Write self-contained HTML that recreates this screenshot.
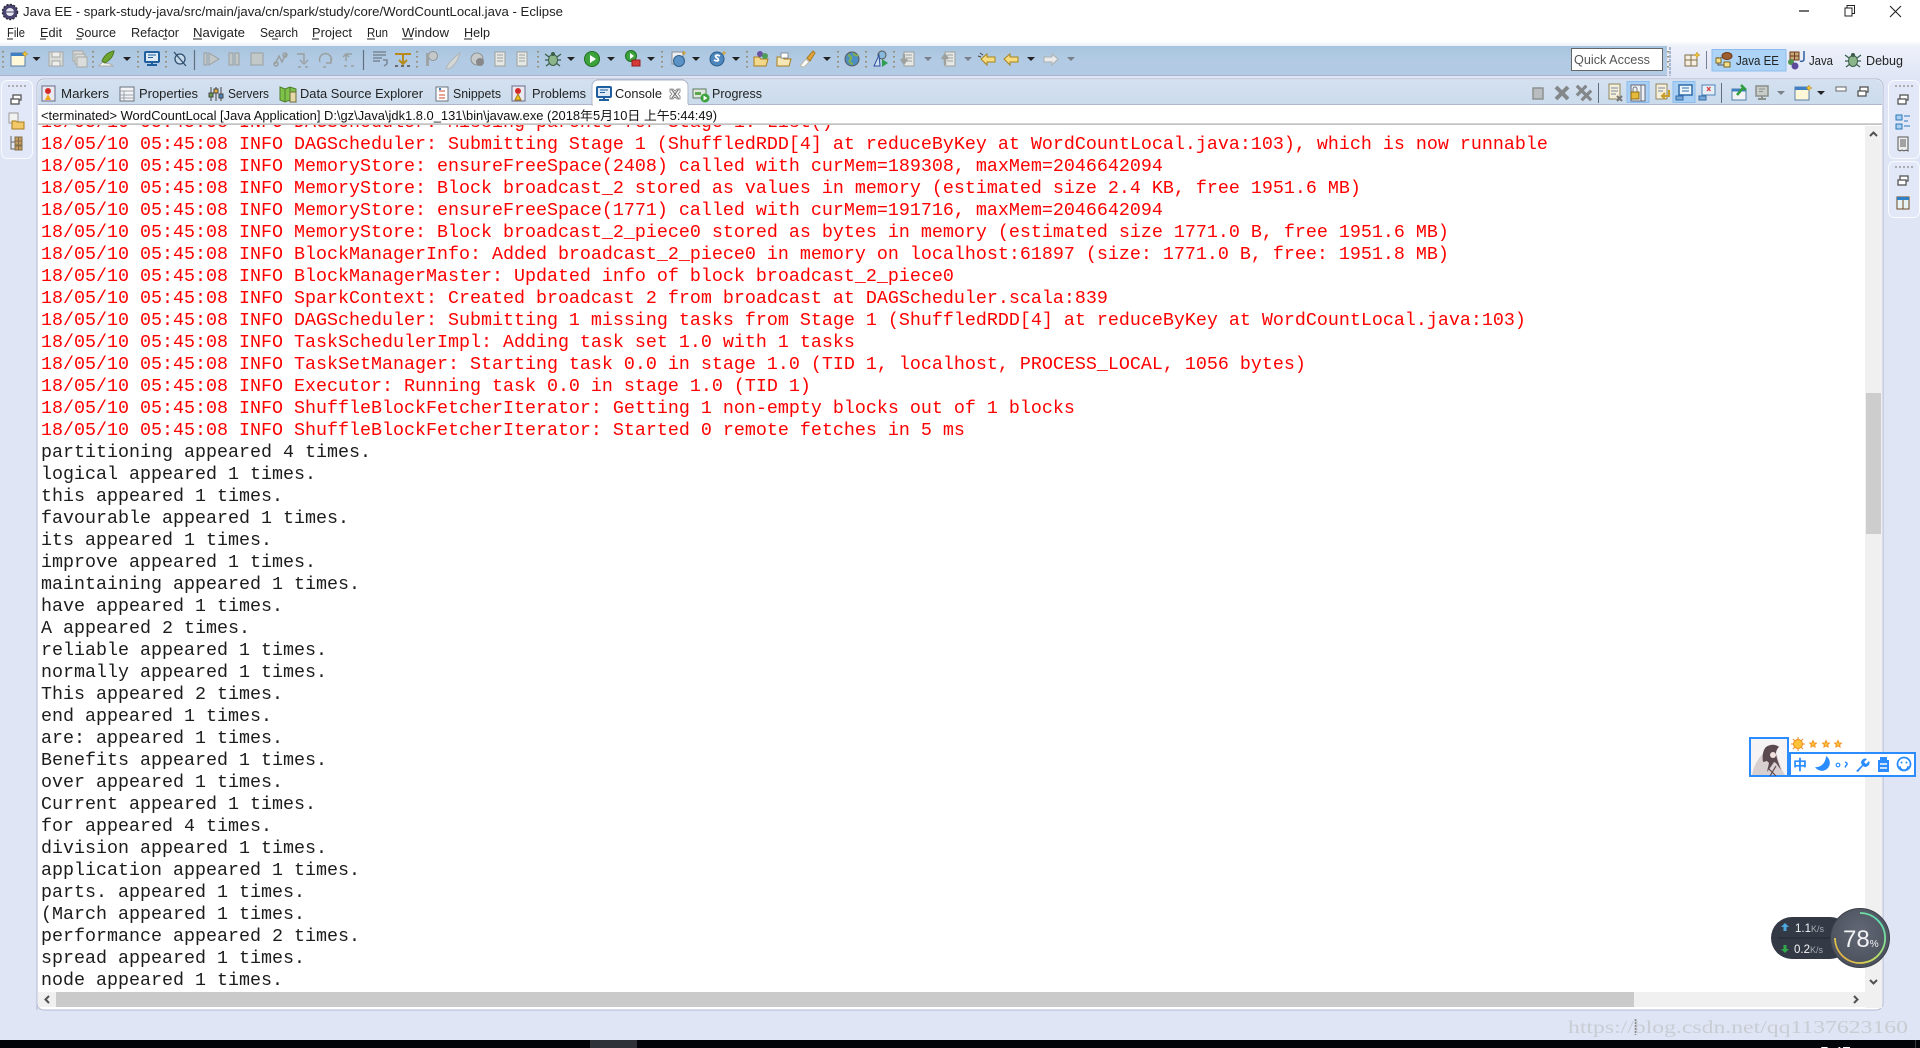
<!DOCTYPE html>
<html><head><meta charset="utf-8"><title>Java EE - Eclipse</title>
<style>
html,body{margin:0;padding:0;background:#dfe5f5;overflow:hidden}
svg{display:block;position:absolute;left:0;top:0}
text{font-family:"Liberation Sans","Noto Sans CJK SC",sans-serif;font-size:13px;fill:#222}
.c text{font-family:"Liberation Mono",monospace;font-size:18.33px}
.r text{fill:#ff0000}
.b text{fill:#1c1c1c}
</style></head><body>
<svg width="1920" height="1048" viewBox="0 0 1920 1048" xmlns="http://www.w3.org/2000/svg">
<defs>
<linearGradient id="tb" x1="0" y1="0" x2="0" y2="1"><stop offset="0" stop-color="#a7c3de"/><stop offset=".4" stop-color="#b1cae3"/><stop offset="1" stop-color="#b3cbe4"/></linearGradient>
<linearGradient id="tb2" x1="0" y1="0" x2="0" y2="1"><stop offset="0" stop-color="#eef1fa"/><stop offset="1" stop-color="#dfe5f5"/></linearGradient>
<linearGradient id="fade" x1="0" y1="0" x2="0" y2="1"><stop offset="0" stop-color="#fff"/><stop offset="1" stop-color="#e8edf5"/></linearGradient>
<linearGradient id="tabs" x1="0" y1="0" x2="0" y2="1"><stop offset="0" stop-color="#d3e0f0"/><stop offset="1" stop-color="#ccdcec"/></linearGradient>
<radialGradient id="ball" cx=".5" cy=".4" r=".7"><stop offset="0" stop-color="#626875"/><stop offset="1" stop-color="#474c58"/></radialGradient>
<linearGradient id="ring" x1="1" y1="0" x2="0" y2="1"><stop offset="0" stop-color="#3fd8c8"/><stop offset=".6" stop-color="#c9e05a"/><stop offset="1" stop-color="#f09a3c"/></linearGradient>
<g id="drop"><path d="M-4-2H4L0 2Z" fill="#222"/></g>
<g id="dropg"><path d="M-4-2H4L0 2Z" fill="#7b8088"/></g>
<g id="grip"><path d="M0-9v2M0-4v2M0 1v2M0 6v2" stroke="#8f7f5e" stroke-width="1.6" stroke-dasharray="1.5 1"/></g>
<g id="newf"><rect x="-7" y="-6" width="14" height="13" fill="#fff8d8" stroke="#5a7fa8"/><rect x="-7" y="-6" width="14" height="3" fill="#3f7fc4"/><path d="M7-8l1 2 2 1-2 1-1 2-1-2-2-1 2-1Z" fill="#f3c33a" stroke="#b08a20" stroke-width=".5"/></g>
<g id="mon"><rect x="-7" y="-7" width="14" height="10" rx="1" fill="#dfeaf6" stroke="#1f5f9e" stroke-width="2"/><path d="M-4-4h8M-4-1.500h5" stroke="#1f5f9e"/><path d="M-5 6h10M0 3v3" stroke="#1f5f9e" stroke-width="2"/></g>
<g id="gmon"><rect x="-6" y="-7" width="12" height="10" fill="#c8ccc8" stroke="#8a8f8a" stroke-width="1.500"/><path d="M-3-4h6M-3-1.500h4" stroke="#8a8f8a"/><path d="M-4 6h8M0 3v3" stroke="#8a8f8a" stroke-width="2"/></g>
<g id="gdoc"><rect x="-5" y="-7" width="10" height="14" fill="#e6e8e6" stroke="#9da19d"/><path d="M-3-4h6M-3-1h6M-3 2h6" stroke="#9da19d"/></g>
<g id="bug"><ellipse cx="0" cy="1" rx="4.500" ry="5.500" fill="#8db58a" stroke="#3a5e4a"/><path d="M-8-5l4 3M8-5l-4 3M-8 1h4M8 1h-4M-7 7l4-3M7 7l-4-3" stroke="#3a5e4a" stroke-width="1.300"/><circle cx="0" cy="-5" r="2" fill="#3a5e4a"/></g>
<g id="xx"><path d="M-6-6L6 6M6-6L-6 6" stroke="#85888a" stroke-width="4"/></g>
<g id="restore"><rect x="-3" y="-5" width="8" height="5" fill="#fff" stroke="#555" stroke-width="1.300"/><rect x="-5" y="-1" width="8" height="5" fill="#fff" stroke="#555" stroke-width="1.300"/></g>
<g id="star"><path d="M0-3.600L1.100-1.100 3.500-.9 1.700.7 2.200 3.200 0 1.900-2.200 3.200-1.700.7-3.500-.9-1.100-1.100Z" fill="#fbc23a" stroke="#f08a1a" stroke-width=".8"/></g>
</defs>

<!-- base -->
<rect width="1920" height="1048" fill="#dfe5f5"/>
<rect width="1920" height="41" fill="#fff"/>
<rect y="41" width="1920" height="6" fill="url(#fade)"/>
<rect y="46" width="1667" height="29" fill="url(#tb)"/>
<rect y="75" width="1667" height="1" fill="#a6b4cc"/>
<rect x="1667" y="46" width="253" height="32" fill="url(#tb2)"/>
<path d="M1670 47v29" stroke="#a6b4cc" stroke-width="2" stroke-dasharray="3 1"/>

<!-- title bar -->
<g transform="translate(10,12)"><circle r="7.500" fill="#4a4470"/><circle r="7.500" fill="none" stroke="#2a2a3a" stroke-width="1.500" stroke-dasharray="2 1.500"/><circle r="4" fill="#e8e8ee"/><path d="M-4 0h8" stroke="#4a4470"/></g>
<text x="23" y="16" textLength="540" lengthAdjust="spacingAndGlyphs" style="font-size:13px">Java EE - spark-study-java/src/main/java/cn/spark/study/core/WordCountLocal.java - Eclipse</text>
<path d="M1799 11h10" stroke="#111" stroke-width="1.200"/>
<rect x="1845" y="8" width="7" height="8" fill="#fff" stroke="#222"/><path d="M1847 8v-2.500h7.500v8h-2.500" fill="none" stroke="#222"/>
<path d="M1890 6l11 11M1901 6l-11 11" stroke="#222" stroke-width="1.100"/>

<!-- menu -->
<g style="font-size:13px">
<text x="7" y="37" textLength="18" lengthAdjust="spacingAndGlyphs">File</text>
<text x="40" y="37" textLength="22" lengthAdjust="spacingAndGlyphs">Edit</text>
<text x="76" y="37" textLength="40" lengthAdjust="spacingAndGlyphs">Source</text>
<text x="131" y="37" textLength="48" lengthAdjust="spacingAndGlyphs">Refactor</text>
<text x="193" y="37" textLength="52" lengthAdjust="spacingAndGlyphs">Navigate</text>
<text x="260" y="37" textLength="38" lengthAdjust="spacingAndGlyphs">Search</text>
<text x="312" y="37" textLength="40" lengthAdjust="spacingAndGlyphs">Project</text>
<text x="367" y="37" textLength="21" lengthAdjust="spacingAndGlyphs">Run</text>
<text x="402" y="37" textLength="47" lengthAdjust="spacingAndGlyphs">Window</text>
<text x="464" y="37" textLength="26" lengthAdjust="spacingAndGlyphs">Help</text>
</g>
<path d="M7 39h6M40 39h6M76 39h6M163 39h4M193 39h9M272 39h6M312 39h7M367 39h8M402 39h11M464 39h8" stroke="#222"/>

<!-- main toolbar icons -->
<use href="#grip" x="3" y="60"/><use href="#newf" x="18" y="59"/><use href="#drop" x="36.500" y="59"/>
<g transform="translate(56,59)"><rect x="-7" y="-7" width="14" height="14" fill="#d9dcd9" stroke="#a6a9a6"/><rect x="-4" y="-7" width="8" height="5" fill="#eee" stroke="#a6a9a6"/><rect x="-4" y="2" width="8" height="5" fill="#eee" stroke="#a6a9a6"/></g>
<g transform="translate(80,59)" stroke="#a6a9a6" fill="#d9dcd9"><rect x="-7" y="-8" width="10" height="10"/><rect x="-5" y="-5" width="10" height="10"/><rect x="-3" y="-2" width="10" height="10"/></g>
<use href="#grip" x="93" y="60"/>
<g transform="translate(107,59)"><path d="M-8 7c2-4 5-4 7-3s4 0 7 3Z" fill="#f1f2ea" stroke="#aaa"/><path d="M-5 2C-3-3 1-7 7-8 6-2 3 1-2 4Z" fill="#6da52f" stroke="#4d7a1e"/></g>
<use href="#drop" x="127" y="59"/><use href="#grip" x="138" y="60"/>
<use href="#mon" x="152" y="59"/><use href="#grip" x="166" y="60"/>
<g transform="translate(180,59)"><circle r="5" fill="#c6d9ea" stroke="#2f4f6f" stroke-width="1.300"/><path d="M-6-7L6 7" stroke="#2f4f6f" stroke-width="1.300"/></g>
<path d="M194.500 50v20" stroke="#5f6f7f" stroke-width="1.200"/>
<g fill="#c2c7c7" stroke="#9aa0a0">
<path d="M204 53h3v12h-3ZM209 53l10 6-10 6Z"/>
<rect x="229" y="53" width="4" height="12"/><rect x="235" y="53" width="4" height="12"/>
<rect x="251" y="53" width="12" height="12"/>
</g>
<g fill="none" stroke="#9aa0a0" stroke-width="1.500">
<path d="M275 64l4-8 3 6 4-8"/><circle cx="276" cy="64" r="2"/><circle cx="285" cy="55" r="2"/>
<path d="M297 54h7v8M300 60l4 4 4-4M298 67h3M305 67h3"/>
<path d="M320 62a6 6 0 1 1 11 0M331 58v5h-5M323 67h3"/>
<path d="M344 66h3M351 66h3M352 54h-6v7M349 57l-3-3-3 3" />
</g>
<path d="M363.500 50v20" stroke="#5f6f7f" stroke-width="1.200"/>
<g transform="translate(380,59)" stroke="#7a8794" fill="none" stroke-width="1.500"><path d="M-7-7h13M-7-4h13M-7-1h9M-7 2h7M3 1h4v4M7 5l-3 2"/></g>
<g transform="translate(403,59)" stroke="#b78a1c" fill="none" stroke-width="2"><path d="M-8-5H8M0-5V4M-4 1l4 4 4-4"/><path d="M-8 7h3M-2 7h3M4 7h3" stroke="#6a6a6a"/></g>
<use href="#grip" x="417" y="60"/>
<g transform="translate(432,59)"><circle cx="1" cy="-3" r="4.500" fill="#c4c8c8" stroke="#8d9292"/><path d="M-6-6h3v13h-3Z" fill="#9ea3a3"/></g>
<path d="M446 68c2-4 7-10 14-15-2 7-6 13-11 16Z" fill="#d3d7d7" stroke="#b0b4b4"/>
<g transform="translate(477,59)"><circle r="6" fill="#c6caca" stroke="#8d9292"/><circle cx="3" cy="3" r="4" fill="#888"/></g>
<use href="#gdoc" x="500" y="59"/><use href="#gdoc" x="522" y="59"/>
<use href="#grip" x="538" y="60"/><use href="#bug" x="553" y="59"/><use href="#drop" x="571" y="59"/>
<g transform="translate(592,59)"><circle r="7.500" fill="#3ca23c" stroke="#1f6f1f"/><path d="M-2-4l6 4-6 4Z" fill="#fff"/></g><use href="#drop" x="611" y="59"/>
<g transform="translate(631,58)"><circle cy="-2" r="5.500" fill="#3ca23c" stroke="#1f6f1f"/><path d="M-1-5l4 3-4 3Z" fill="#fff"/><rect x="1" y="2" width="8" height="6" fill="#d83a3a" stroke="#8e1f1f"/></g><use href="#drop" x="651" y="59"/>
<use href="#grip" x="662" y="60"/>
<g transform="translate(678,59)"><rect x="-6" y="-7" width="11" height="12" fill="#eceef2" stroke="#8a9098"/><circle cx="1" cy="2" r="5.500" fill="#5b93c6" stroke="#2f5f8a"/><path d="M6-8v4M4-6h4" stroke="#d0a020"/></g><use href="#drop" x="696" y="59"/>
<g transform="translate(717,59)"><circle r="7" fill="#4d87bd" stroke="#2a5a8a"/><path d="M3-3c-4-2-6 0-3 2s1 4-3 2" stroke="#fff" stroke-width="1.800" fill="none"/><path d="M7-8v4M5-6h4" stroke="#d0a020"/></g><use href="#drop" x="736" y="59"/>
<use href="#grip" x="747" y="60"/>
<g transform="translate(761,59)"><path d="M-7-2h5l2 2H7L5 7H-7Z" fill="#f1d88a" stroke="#a87c1c"/><circle cx="-1" cy="-5" r="3" fill="#6b52a0"/><circle cx="4" cy="-3" r="3" fill="#4e9c5a"/></g>
<g transform="translate(784,59)"><path d="M-7-2h5l2 2H7L5 7H-7Z" fill="#f6e7b8" stroke="#a87c1c"/><rect x="-3" y="-6" width="7" height="5" fill="#fff" stroke="#8a8f98"/></g>
<g transform="translate(807,59)"><path d="M-7 7L-1 0 2 3-3 8Z" fill="#fff" stroke="#bba"/><path d="M0-1L6-8 8-6 3 2Z" fill="#e2a33c" stroke="#a87c1c"/></g><use href="#drop" x="827" y="59"/>
<use href="#grip" x="838" y="60"/>
<g transform="translate(852,59)"><circle r="7" fill="#4d8fc2" stroke="#5a5a5a"/><path d="M-4-4c3 1 4 3 2 5s2 4 3 4M2-6c-1 2 3 3 4 2" stroke="#7fb04a" stroke-width="2" fill="none"/></g>
<use href="#grip" x="866" y="60"/>
<g transform="translate(881,59)"><circle cx="1" cy="-4" r="4" fill="#88b8dc" stroke="#555"/><path d="M-7 7L-2-4-1 7Z" fill="#cfe0f0" stroke="#2f4f9f"/><path d="M1 0l6 4-6 4Z" fill="#2f9f4f"/></g>
<use href="#grip" x="894" y="60"/>
<g transform="translate(907,59)"><use href="#gdoc" x="2"/><path d="M-3-5V3M-6 0l3 4 3-4" stroke="#9da19d" stroke-width="2.500" fill="none"/></g><use href="#dropg" x="928" y="59"/>
<g transform="translate(948,59)"><use href="#gdoc" x="2"/><path d="M-3 6V-3M-6 0l3-4 3 4" stroke="#9da19d" stroke-width="2.500" fill="none"/></g><use href="#dropg" x="968" y="59"/>
<g fill="#f8dd80" stroke="#a8841c"><path d="M981 59l6-5v3h8v5h-8v3Z"/><path d="M1004 59l6-5v3h8v5h-8v3Z"/></g>
<path d="M980 53l3 2M978 56l3 1" stroke="#444"/><use href="#drop" x="1031" y="59"/>
<path d="M1058 59l-6-5v3h-8v5h8v3Z" fill="#eaeaea" stroke="#aab0b0"/><use href="#dropg" x="1071" y="59"/>

<!-- quick access + perspectives -->
<rect x="1571.500" y="48.500" width="91" height="22" fill="#fff" stroke="#666"/>
<text x="1574" y="64" textLength="76" lengthAdjust="spacingAndGlyphs" style="fill:#555">Quick Access</text>
<use href="#grip" x="1668" y="60"/>
<g transform="translate(1691,60)"><rect x="-6" y="-5" width="12" height="11" fill="#f4efe2" stroke="#7f6f4a"/><path d="M-6 0H6M0-5V6" stroke="#7f6f4a"/><path d="M6-8l1 2 2 1-2 1-1 2-1-2-2-1 2-1Z" fill="#f3c33a" stroke="#b08a20" stroke-width=".5"/></g>
<path d="M1706.500 51v18" stroke="#7a8090"/>
<rect x="1712" y="49.500" width="74" height="21.500" fill="#add4f6" stroke="#8dbdec"/>
<g transform="translate(1724,60)"><path d="M-6-3V5H1M-3-3V1" stroke="#555" fill="none"/><rect x="-8" y="-2" width="5" height="5" fill="#f6e18a" stroke="#7a6420"/><rect x="0" y="2" width="6" height="5" fill="#f6e18a" stroke="#7a6420"/><ellipse cx="3" cy="-4" rx="5" ry="3.500" fill="#9e5d2f" stroke="#6b3b1a"/></g>
<text x="1736" y="65" textLength="43" lengthAdjust="spacingAndGlyphs">Java EE</text>
<g transform="translate(1796,60)"><rect x="-6" y="-8" width="9" height="8" fill="#c8a97c" stroke="#6b3b1a"/><path d="M-1.500-8v8M-6-4h9" stroke="#6b3b1a"/><circle cx="-5" cy="2" r="3" fill="#4e8f4e"/><circle cx="-1" cy="6" r="3.500" fill="#5c4a9c"/><path d="M8-9v8c0 2-2 3-4 2" stroke="#2f5f9e" stroke-width="1.500" fill="none"/></g>
<text x="1809" y="65" textLength="24" lengthAdjust="spacingAndGlyphs">Java</text>
<use href="#bug" x="1853" y="60"/>
<text x="1866" y="65" textLength="37" lengthAdjust="spacingAndGlyphs">Debug</text>

<!-- left trim -->
<rect x="1.500" y="80.500" width="31" height="78" rx="6" fill="#e2e8f7" stroke="#fafbff"/>
<path d="M8 86h2M12 86h2M16 86h2M20 86h2M24 86h2" stroke="#999" stroke-width="1.500"/>
<use href="#restore" x="16" y="100"/>
<g transform="translate(16,121)"><rect x="-7" y="-8" width="9" height="10" fill="#f2f2f2" stroke="#9a9a9a"/><path d="M-4 0h4l1 1h7v7h-12Z" fill="#f2c869" stroke="#a87c1c"/></g>
<g transform="translate(16,143)"><path d="M-5-7V6H3M-5 -1H3" stroke="#666" fill="none"/><rect x="-1" y="-6" width="3.500" height="4" fill="#c79a5f" stroke="#7f6f4a"/><rect x="-1" y="-2" width="3.500" height="4" fill="#c79a5f" stroke="#7f6f4a"/><rect x="-1" y="3" width="3.500" height="4" fill="#c79a5f" stroke="#7f6f4a"/><rect x="2.500" y="-6" width="3.500" height="4" fill="#c79a5f" stroke="#7f6f4a"/><rect x="2.500" y="-2" width="3.500" height="4" fill="#c79a5f" stroke="#7f6f4a"/><rect x="2.500" y="3" width="3.500" height="4" fill="#c79a5f" stroke="#7f6f4a"/></g>

<!-- right trim -->
<rect x="1888.500" y="80.500" width="31" height="78" rx="6" fill="#e2e8f7" stroke="#fafbff"/>
<rect x="1888.500" y="161.500" width="31" height="56" rx="6" fill="#e2e8f7" stroke="#fafbff"/>
<path d="M1895 86h2M1899 86h2M1903 86h2M1907 86h2M1911 86h2M1895 167h2M1899 167h2M1903 167h2M1907 167h2M1911 167h2" stroke="#999" stroke-width="1.500"/>
<use href="#restore" x="1903" y="100"/><use href="#restore" x="1903" y="181"/>
<g transform="translate(1903,122)"><rect x="-7" y="-7" width="6" height="5" fill="#a9d0f0" stroke="#2a78b8"/><rect x="-7" y="2" width="6" height="5" fill="#a9d0f0" stroke="#2a78b8"/><path d="M1-6h6M1-1h4M1 4h6" stroke="#2a78b8"/></g>
<g transform="translate(1903,144)"><path d="M-5-7H5V7L3 6 1 7-1 6-3 7-5 6Z" fill="#eee" stroke="#555"/><path d="M-3-4h6M-3-2h6M-3 0h6M-3 2h6" stroke="#555"/></g>
<g transform="translate(1903,203)"><rect x="-6" y="-6" width="12" height="12" fill="#e8f4f4" stroke="#6b4a20"/><rect x="-6" y="-6" width="12" height="3" fill="#2f7fc4"/><path d="M0-3V6" stroke="#6b4a20"/></g>

<!-- console panel -->
<path d="M37 1010V86a7 7 0 0 1 7-7H1876a7 7 0 0 1 7 7V1003a7 7 0 0 1-7 7H44a7 7 0 0 1-7-7Z" fill="#fff" stroke="#b2b9d0"/>
<path d="M38 104V86a6 6 0 0 1 6-6H1876a6 6 0 0 1 6 6V104Z" fill="url(#tabs)"/>
<rect x="38" y="104" width="1844" height="1" fill="#aeb6cc"/>
<path d="M592 105V86a6 6 0 0 1 6-6H682a6 6 0 0 1 6 6V105Z" fill="#fff" stroke="#aeb6cc"/>
<rect x="593" y="104" width="95" height="2" fill="#fff"/>
<rect x="38" y="123.500" width="1844" height="1.200" fill="#a8a8a8"/>

<!-- tabs -->
<g style="font-size:13px">
<text x="61" y="98" textLength="48" lengthAdjust="spacingAndGlyphs">Markers</text>
<text x="139" y="98" textLength="59" lengthAdjust="spacingAndGlyphs">Properties</text>
<text x="228" y="98" textLength="41" lengthAdjust="spacingAndGlyphs">Servers</text>
<text x="300" y="98" textLength="123" lengthAdjust="spacingAndGlyphs">Data Source Explorer</text>
<text x="453" y="98" textLength="48" lengthAdjust="spacingAndGlyphs">Snippets</text>
<text x="532" y="98" textLength="54" lengthAdjust="spacingAndGlyphs">Problems</text>
<text x="615" y="98" textLength="47" lengthAdjust="spacingAndGlyphs">Console</text>
<text x="712" y="98" textLength="50" lengthAdjust="spacingAndGlyphs">Progress</text>
</g>
<g transform="translate(48,94)"><rect x="-6" y="-8" width="13" height="15" fill="#eaeaf0" stroke="#6a6a8a"/><circle cy="-3" r="3" fill="#d52a2a"/><path d="M-3 6l3-6 3 6Z" fill="#f2a51c"/></g>
<g transform="translate(127,94)"><rect x="-7" y="-7" width="14" height="14" fill="#f4f4f6" stroke="#6a7380"/><path d="M-7-3H7M-7 1H7M-7 4H7M-3-3V7" stroke="#9aa3b0"/></g>
<g transform="translate(216,94)" stroke="#444"><path d="M-5-7V7M0-7V7M5-7V7" fill="none"/><rect x="-7" y="-1" width="4" height="4" fill="#6ba04a"/><rect x="-2" y="-5" width="4" height="4" fill="#e2b13c"/><rect x="3" y="0" width="4" height="4" fill="#4f86c0"/></g>
<g transform="translate(288,94)"><path d="M-8-7l5 2 5-2 6 2V8L2 6-3 8-8 6Z" fill="#7fc24a" stroke="#4c7f2a"/><path d="M-3-5V8M2-7V6" stroke="#4c7f2a"/><rect x="2" y="-2" width="6" height="10" fill="#e6d9a8" stroke="#6b6b3a"/></g>
<g transform="translate(442,94)"><rect x="-6" y="-7" width="12" height="14" fill="#fff" stroke="#6a7380"/><path d="M-3-3h6M-3 1h6M-3 4h6" stroke="#d04a2a"/><path d="M-3-5h2" stroke="#3a7ac0" stroke-width="2"/></g>
<g transform="translate(518,94)"><rect x="-6" y="-8" width="13" height="15" fill="#eaeaf0" stroke="#6a6a8a"/><circle cy="-3" r="3" fill="#d52a2a"/><path d="M-3 6l3-6 3 6Z" fill="#f2c51c" stroke="#a87c1c"/></g>
<use href="#mon" x="604" y="94"/>
<g transform="translate(675,94)" fill="none" stroke="#777"><path d="M-3.500-4.500L3.500 4.500M3.500-4.500L-3.500 4.500" stroke-width="1.200"/><path d="M-5-5h3l2 2 2-2h3v3l-2 2 2 2v3h-3l-2-2-2 2h-3v-3l2-2-2-2Z" stroke-width=".8"/></g>
<g transform="translate(700,94)"><rect x="-7" y="-5" width="13" height="9" fill="#dfe5df" stroke="#5a7a5a"/><rect x="-5" y="-2" width="6" height="3" fill="#5aa84a"/><circle cx="5" cy="4" r="4.500" fill="#3ca23c"/><path d="M3.500 1.500l4 2.500-4 2.500Z" fill="#fff"/></g>

<!-- panel toolbar -->
<rect x="1627" y="81.500" width="22" height="21" fill="#a9d0f4" stroke="#8dbdec"/>
<rect x="1673" y="81.500" width="22" height="21" fill="#a9d0f4" stroke="#8dbdec"/>
<rect x="1533" y="88" width="10" height="11" fill="#b9bdbd" stroke="#8d9292" stroke-width="1.500"/>
<use href="#xx" x="1562" y="93"/>
<g transform="translate(1584,93) scale(.8)"><use href="#xx" x="-3" y="-3"/><use href="#xx" x="3" y="3"/></g>
<path d="M1598.500 83v20M1721.500 83v20" stroke="#5f6f7f"/>
<g transform="translate(1615,93)"><rect x="-6" y="-9" width="11" height="15" fill="#f5eed8" stroke="#8f8660"/><path d="M-4-5h7M-4-2h7M-4 1h5" stroke="#7a8aa0"/><path d="M2 3l5 5M7 3l-5 5" stroke="#777" stroke-width="2"/></g>
<g transform="translate(1638,93)"><rect x="-7" y="-8" width="14" height="16" fill="#eef2f6" stroke="#667"/><path d="M3-8V8" stroke="#667"/><rect x="-7" y="-1" width="8" height="7" fill="#e5b93a" stroke="#8a6a10"/><path d="M-5-1v-3a2 2 0 0 1 4 0v3" stroke="#777" fill="none"/></g>
<g transform="translate(1662,93)"><rect x="-6" y="-9" width="11" height="15" fill="#f5eed8" stroke="#8f8660"/><path d="M-4-5h7M-4-2h5" stroke="#7a8aa0"/><path d="M7-3V3H0M3 0L0 3l3 3" stroke="#c99d2a" stroke-width="2" fill="none"/></g>
<g transform="translate(1684,93)"><rect x="-5" y="-8" width="13" height="10" fill="#eef5fb" stroke="#2f6aa8" stroke-width="1.500"/><path d="M-2-5h7M-2-2h7" stroke="#2f6aa8"/><rect x="-8" y="3" width="7" height="4" fill="#7aa8d8" stroke="#2f6aa8"/></g>
<g transform="translate(1707,93)"><rect x="-5" y="-8" width="13" height="10" fill="#e6eef6" stroke="#4f82b8"/><path d="M0-6l3.500 4M3.500-6L0-2" stroke="#d84040" stroke-width="1.300"/><rect x="-8" y="3" width="7" height="4" fill="#7aa8d8" stroke="#2f6aa8"/></g>
<g transform="translate(1739,93)"><rect x="-7" y="-4" width="14" height="11" fill="#f4f4f6" stroke="#4f7fa8"/><rect x="-7" y="-4" width="14" height="2.500" fill="#3f7fc4"/><path d="M-2 2L4-5M2-8l5 5" stroke="#2f9f3f" stroke-width="2.500"/></g>
<use href="#gmon" x="1762" y="93"/><use href="#dropg" x="1781" y="93"/>
<use href="#newf" x="1802" y="93"/><use href="#drop" x="1821" y="93"/>
<rect x="1836" y="87" width="10" height="4" fill="#fff" stroke="#666"/>
<use href="#restore" x="1863" y="92"/>

<!-- breadcrumb -->
<text x="41" y="120" textLength="676" lengthAdjust="spacingAndGlyphs" style="font-size:12.500px;fill:#111">&lt;terminated&gt; WordCountLocal [Java Application] D:\gz\Java\jdk1.8.0_131\bin\javaw.exe (2018年5月10日 上午5:44:49)</text>

<!-- console -->
<clipPath id="cc"><rect x="38" y="125" width="1827" height="867"/></clipPath>
<g class="c" clip-path="url(#cc)">
<g class="r">
<text x="41" y="127">18/05/10 05:45:08 INFO DAGScheduler: Missing parents for Stage 1: List()</text>
<text x="41" y="149">18/05/10 05:45:08 INFO DAGScheduler: Submitting Stage 1 (ShuffledRDD[4] at reduceByKey at WordCountLocal.java:103), which is now runnable</text>
<text x="41" y="171">18/05/10 05:45:08 INFO MemoryStore: ensureFreeSpace(2408) called with curMem=189308, maxMem=2046642094</text>
<text x="41" y="193">18/05/10 05:45:08 INFO MemoryStore: Block broadcast_2 stored as values in memory (estimated size 2.4 KB, free 1951.6 MB)</text>
<text x="41" y="215">18/05/10 05:45:08 INFO MemoryStore: ensureFreeSpace(1771) called with curMem=191716, maxMem=2046642094</text>
<text x="41" y="237">18/05/10 05:45:08 INFO MemoryStore: Block broadcast_2_piece0 stored as bytes in memory (estimated size 1771.0 B, free 1951.6 MB)</text>
<text x="41" y="259">18/05/10 05:45:08 INFO BlockManagerInfo: Added broadcast_2_piece0 in memory on localhost:61897 (size: 1771.0 B, free: 1951.8 MB)</text>
<text x="41" y="281">18/05/10 05:45:08 INFO BlockManagerMaster: Updated info of block broadcast_2_piece0</text>
<text x="41" y="303">18/05/10 05:45:08 INFO SparkContext: Created broadcast 2 from broadcast at DAGScheduler.scala:839</text>
<text x="41" y="325">18/05/10 05:45:08 INFO DAGScheduler: Submitting 1 missing tasks from Stage 1 (ShuffledRDD[4] at reduceByKey at WordCountLocal.java:103)</text>
<text x="41" y="347">18/05/10 05:45:08 INFO TaskSchedulerImpl: Adding task set 1.0 with 1 tasks</text>
<text x="41" y="369">18/05/10 05:45:08 INFO TaskSetManager: Starting task 0.0 in stage 1.0 (TID 1, localhost, PROCESS_LOCAL, 1056 bytes)</text>
<text x="41" y="391">18/05/10 05:45:08 INFO Executor: Running task 0.0 in stage 1.0 (TID 1)</text>
<text x="41" y="413">18/05/10 05:45:08 INFO ShuffleBlockFetcherIterator: Getting 1 non-empty blocks out of 1 blocks</text>
<text x="41" y="435">18/05/10 05:45:08 INFO ShuffleBlockFetcherIterator: Started 0 remote fetches in 5 ms</text>
</g>
<g class="b">
<text x="41" y="457">partitioning appeared 4 times.</text>
<text x="41" y="479">logical appeared 1 times.</text>
<text x="41" y="501">this appeared 1 times.</text>
<text x="41" y="523">favourable appeared 1 times.</text>
<text x="41" y="545">its appeared 1 times.</text>
<text x="41" y="567">improve appeared 1 times.</text>
<text x="41" y="589">maintaining appeared 1 times.</text>
<text x="41" y="611">have appeared 1 times.</text>
<text x="41" y="633">A appeared 2 times.</text>
<text x="41" y="655">reliable appeared 1 times.</text>
<text x="41" y="677">normally appeared 1 times.</text>
<text x="41" y="699">This appeared 2 times.</text>
<text x="41" y="721">end appeared 1 times.</text>
<text x="41" y="743">are: appeared 1 times.</text>
<text x="41" y="765">Benefits appeared 1 times.</text>
<text x="41" y="787">over appeared 1 times.</text>
<text x="41" y="809">Current appeared 1 times.</text>
<text x="41" y="831">for appeared 4 times.</text>
<text x="41" y="853">division appeared 1 times.</text>
<text x="41" y="875">application appeared 1 times.</text>
<text x="41" y="897">parts. appeared 1 times.</text>
<text x="41" y="919">(March appeared 1 times.</text>
<text x="41" y="941">performance appeared 2 times.</text>
<text x="41" y="963">spread appeared 1 times.</text>
<text x="41" y="985">node appeared 1 times.</text>
</g>
</g>

<!-- scrollbars -->
<rect x="1865" y="126" width="17" height="882" fill="#f0f0f0"/>
<rect x="1866" y="393" width="15" height="141" fill="#cdcdcd"/>
<path d="M1870 136l3.500-3.500 3.500 3.500" fill="none" stroke="#505050" stroke-width="2"/>
<path d="M1870 980l3.500 3.500 3.500-3.500" fill="none" stroke="#505050" stroke-width="2"/>
<rect x="38" y="992" width="1827" height="15" fill="#f0f0f0"/>
<rect x="56" y="992" width="1578" height="15" fill="#cacaca"/>
<path d="M49 996l-3.500 3.500 3.500 3.500" fill="none" stroke="#505050" stroke-width="2"/>
<path d="M1854 996l3.500 3.500-3.500 3.500" fill="none" stroke="#505050" stroke-width="2"/>

<!-- IME widget -->
<rect x="1750" y="738" width="38" height="38" fill="#f6f3f4" stroke="#2a8cff" stroke-width="2"/>
<path d="M1752 775c2-10 6-17 12-22 4-3 10-2 13 2 2 7 4 14 8 20Z" fill="#d8cfd0"/>
<path d="M1763 762c-1-6 0-12 3-15 4-3 10-3 13 0-2 2-3 4-3 7 1 6 3 10 5 16l-5-7-2-1c-2 3-4 6-7 10l2-9-2-2Z" fill="#5b4950"/>
<circle cx="1773" cy="755" r="3" fill="#efe2de"/>
<path d="M1768 768l8 8M1776 766l-6 10" stroke="#5b4950" stroke-width="1.200"/>
<rect x="1790" y="753" width="125" height="23" fill="#fff" stroke="#2a8cff" stroke-width="2"/>
<text x="1793" y="770" style="font-size:14px;font-weight:bold;fill:#2a8cff;font-family:'Liberation Sans','Noto Sans CJK SC',sans-serif">中</text>
<path d="M1826 756a8 8 0 1 1-11 11c5 1 11-4 11-11Z" fill="#2a8cff"/>
<circle cx="1838" cy="765" r="1.800" fill="none" stroke="#2a8cff" stroke-width="1.200"/><path d="M1845 762.500a1.500 1.500 0 0 1 1 3l-1 2" stroke="#2a8cff" stroke-width="1.500" fill="none"/>
<path d="M1856 771l6-6a4 4 0 0 1 5-6l-3 3 2 2 3-3a4 4 0 0 1-6 5l-5 6Z" fill="#2a8cff"/>
<path d="M1878 760h11v12h-11ZM1880 757h7v3h-7Z" fill="#2a8cff"/><path d="M1880 764h7M1880 768h7" stroke="#fff" stroke-width="1.500"/>
<circle cx="1904" cy="764" r="6.500" fill="none" stroke="#2a8cff" stroke-width="1.800"/><circle cx="1901.500" cy="762.500" r="1" fill="#2a8cff"/><circle cx="1906.500" cy="762.500" r="1" fill="#2a8cff"/><path d="M1900 766a4 4 0 0 0 8 0" fill="none" stroke="#2a8cff" stroke-width="1.300"/>
<circle cx="1798" cy="744" r="4.500" fill="#fbc23a" stroke="#f08a1a"/><path d="M1798 737v2M1798 749v2M1791 744h2M1803 744h2M1793 739l1.500 1.500M1803 739l-1.500 1.500M1793 749l1.500-1.500M1803 749l-1.500-1.500" stroke="#f08a1a"/>
<use href="#star" x="1813" y="744"/><use href="#star" x="1826" y="744"/><use href="#star" x="1838" y="744"/>

<!-- net widget -->
<rect x="1771" y="917" width="80" height="42" rx="21" fill="#333945"/>
<path d="M1778 938h62" stroke="#262b33"/>
<path d="M1785 923l4 4h-2.500v4h-3v-4h-2.500Z" fill="#4ea8e0"/>
<path d="M1785 953l4-4h-2.500v-4h-3v4h-2.500Z" fill="#2fa84a"/>
<text x="1795" y="932" style="font-size:11.500px;fill:#f4f4f4">1.1<tspan style="font-size:9px;fill:#a8acb4">K/s</tspan></text>
<text x="1794" y="953" style="font-size:11.500px;fill:#f4f4f4">0.2<tspan style="font-size:9px;fill:#a8acb4">K/s</tspan></text>
<circle cx="1860" cy="938" r="29.500" fill="url(#ball)" stroke="#3a3f4a" stroke-width="1"/>
<path d="M1860 913a25 25 0 0 1 4 49.700A25 25 0 0 1 1835 938" fill="none" stroke="url(#ring)" stroke-width="1.800"/>
<text x="1843" y="947" style="font-size:24px;fill:#f2f2f4">78<tspan style="font-size:10px">%</tspan></text>

<!-- watermark -->
<text x="1568" y="1033" textLength="340" lengthAdjust="spacingAndGlyphs" style="font-family:'Liberation Serif',serif;font-size:18px;fill:#c9ccd3">https://blog.csdn.net/qq1137623160</text>
<path d="M1635.500 1019v16" stroke="#888" stroke-width="1.500" stroke-dasharray="2 1"/>

<!-- taskbar -->
<rect y="1040" width="1920" height="8" fill="#02040a"/>
<rect x="590" y="1040" width="47" height="8" fill="#2e3238"/>
<rect x="1915" y="1040" width="1" height="8" fill="#3a3a3a"/>
<clipPath id="tk"><rect x="1810" y="1046" width="40" height="2"/></clipPath>
<text x="1820" y="1058" clip-path="url(#tk)" style="font-size:16px;fill:#fff">5:47</text>
</svg>
</body></html>
